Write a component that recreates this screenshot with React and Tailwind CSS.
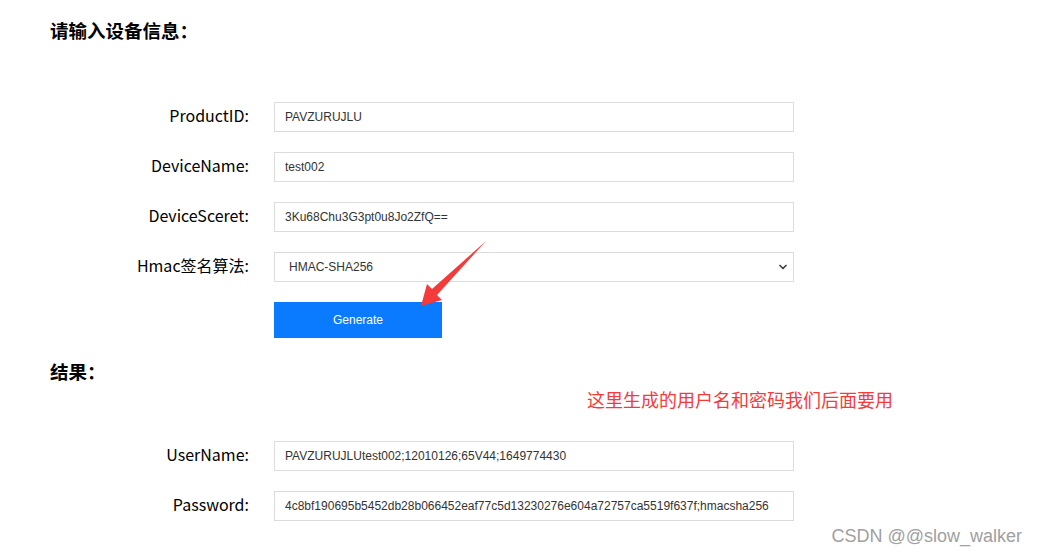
import React from "react";
import { ChevronDown } from "lucide-react";

const cjk = { fontFamily: '"Noto Sans CJK SC", "Noto Sans", sans-serif' };
const arial = { fontFamily: '"Liberation Sans", Arial, sans-serif' };

const deviceFields = [
  { label: "ProductID:", value: "PAVZURUJLU" },
  { label: "DeviceName:", value: "test002" },
  { label: "DeviceSceret:", value: "3Ku68Chu3G3pt0u8Jo2ZfQ==" },
];

const resultFields = [
  { label: "UserName:", value: "PAVZURUJLUtest002;12010126;65V44;1649774430" },
  {
    label: "Password:",
    value: "4c8bf190695b5452db28b066452eaf77c5d13230276e604a72757ca5519f637f;hmacsha256",
  },
];

const FieldRow = ({ label, children, className = "" }) => (
  <div className={`flex items-center h-[30px] ${className}`}>
    <div className="w-[199px] pb-[5px] text-right text-[16px] text-black leading-none" style={cjk}>
      {label}
    </div>
    <div className="ml-[25px] w-[520px] h-full">{children}</div>
  </div>
);

const TextBox = ({ value }) => (
  <div
    className="h-full border border-[#dcdcdc] px-[10px] flex items-center text-[12px] text-[#333]"
    style={arial}
  >
    {value}
  </div>
);

export default function App() {
  return (
    <div className="relative w-[1038px] h-[555px] bg-white overflow-hidden">
      <div className="pl-[50px] pt-[17px]">
        <h2 className="text-[18.5px] font-bold leading-[26px] text-black" style={cjk}>
          请输入设备信息：
        </h2>

        <div className="mt-[59px] flex flex-col gap-[20px]">
          {deviceFields.map((f) => (
            <FieldRow key={f.label} label={f.label}>
              <TextBox value={f.value} />
            </FieldRow>
          ))}
          <FieldRow label="Hmac签名算法:">
            <div
              className="h-full border border-[#dcdcdc] pl-[14px] pr-[4px] flex items-center justify-between text-[12px] text-[#333]"
              style={arial}
            >
              <span>HMAC-SHA256</span>
              <ChevronDown size={12} strokeWidth={3.5} className="text-[#444]" />
            </div>
          </FieldRow>
          <div className="flex">
            <button
              className="ml-[224px] w-[168px] h-[36px] bg-[#0a7bff] text-white text-[12px]"
              style={arial}
            >
              Generate
            </button>
          </div>
        </div>

        <h2 className="mt-[20px] text-[18.5px] font-bold leading-[26px] text-black" style={cjk}>
          结果：
        </h2>
        <p className="mt-[3px] ml-[537px] text-[18px] leading-[24px] text-[#f53a3a]" style={cjk}>
          这里生成的用户名和密码我们后面要用
        </p>

        <div className="mt-[30px] flex flex-col gap-[20px]">
          {resultFields.map((f) => (
            <FieldRow key={f.label} label={f.label}>
              <TextBox value={f.value} />
            </FieldRow>
          ))}
        </div>
      </div>

      {/* annotation arrow */}
      <svg className="absolute left-0 top-0" width="1038" height="555" viewBox="0 0 1038 555">
        <polygon
          points="486,241 437,295 442,300 421,306 427,284 432,289"
          fill="#f53a3a"
        />
      </svg>

      <div
        className="absolute right-[16px] bottom-[9px] text-[18px] leading-[20px] text-[#a0a0a0]"
        style={arial}
      >
        CSDN @@slow_walker
      </div>
    </div>
  );
}
